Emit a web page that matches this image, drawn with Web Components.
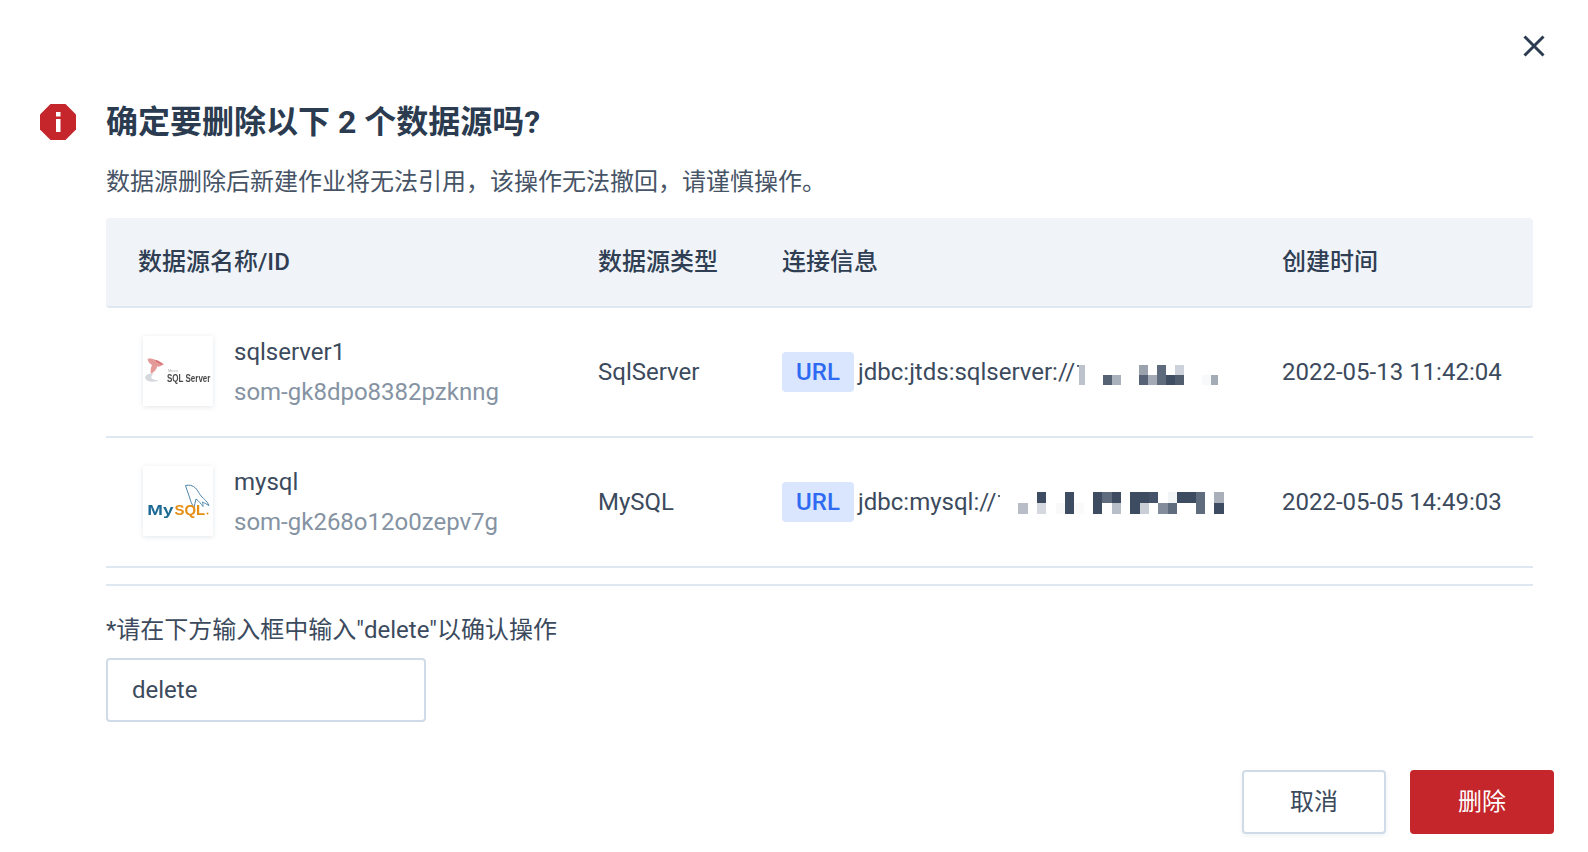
<!DOCTYPE html>
<html lang="zh"><head><meta charset="utf-8"><title>删除数据源</title>
<style>
html,body{margin:0;background:#fff}
body{font:24px/40px Roboto,"Noto Sans CJK SC",sans-serif;color:#3c4a5d}
</style></head>
<body>
<delete-dialog>
  <span slot="title">确定要删除以下 2 个数据源吗?</span>
  <span slot="desc">数据源删除后新建作业将无法引用，该操作无法撤回，请谨慎操作。</span>
  <ds-table>
    <ds-head></ds-head>
    <ds-row name="sqlserver1" rid="som-gk8dpo8382pzknng" type="SqlServer" url="jdbc:jtds:sqlserver://" clip="221" time="2022-05-13 11:42:04" shift="6"
      cells='[[6,"#bcc3cd","#bcc3cd"],[18],[9,"","#556274"],[9,"","#a9b1bc"],[18],[9,"#9aa2ae","#566376"],[9,"","#a4abb6"],[9,"#5e6b7c","#5e6b7c"],[9,"","#3f4e62"],[9,"#cdd2da","#505e70"],[18],[9,"","#f8f9fa"],[7,"","#a3abb6"]]' ch="10">
      <sql-logo></sql-logo>
    </ds-row>
    <ds-row name="mysql" rid="som-gk268o12o0zepv7g" type="MySQL" url="jdbc:mysql://" clip="142" time="2022-05-05 14:49:03" shift="2" lead="18.3"
      cells='[[9.33,"","#b8bdc8"],[9.33],[9.33,"#3d4c60","#d5d8df"],[9.33],[9.33,"","#f9f9fa"],[9.33,"#3d4c60","#3d4c60"],[9.33,"","#fafafa"],[9.33],[9.33,"#3d4c60","#3d4c60"],[9.33,"#5f6c7d",""],[9.33,"#3d4c60","#b9bfc9"],[9.33],[9.33,"#3d4c60","#3d4c60"],[9.33,"#3d4c60","#c9ced7"],[9.33,"#45536a",""],[9.33,"","#828c9a"],[9.33,"#f3f4f5","#5f6c7d"],[9.33,"#3d4c60",""],[9.33,"#3d4c60",""],[9.33,"#5f6c7d","#5f6c7d"],[9.33],[9.33,"#a9b0ba","#3d4c60"]]' ch="11">
      <my-logo></my-logo>
    </ds-row>
  </ds-table>
  <span slot="label">*请在下方输入框中输入"delete"以确认操作</span>
  <confirm-field slot="field">delete</confirm-field>
  <ui-button slot="actions">取消</ui-button>
  <ui-button slot="actions" danger>删除</ui-button>
</delete-dialog>
<script>
function def(name,css,html,init){
  customElements.define(name,class extends HTMLElement{
    connectedCallback(){
      if(this.shadowRoot)return;
      const r=this.attachShadow({mode:'open'});
      r.innerHTML='<style>'+css+'</style>'+(typeof html==='function'?html(this):html);
      if(init)init(this,r);
    }
  });
}
const COLS='grid-template-columns:492px 184px 500px 1fr;';
def('delete-dialog',`
:host{display:block;box-sizing:border-box;height:852px;width:1588px;overflow:hidden;background:#fff}
.close{display:flex;justify-content:flex-end;padding:35px 43px 0 0;height:22px}
.close svg{display:block}
.head{display:flex;align-items:center;margin:45px 55px 0 40px;height:40px;gap:30px}
.icon{flex:none;display:block}
.title{font-size:32px;font-weight:700;color:#2b3b50;line-height:40px;white-space:pre}
.body{margin:0 55px 0 106px}
.desc{margin-top:20px;line-height:40px;height:40px;color:#465466;margin-bottom:16px}
.rule{height:2px;background:#dfe7f0;margin-top:16px}
.label{margin-top:24px;height:40px;color:#3c4a5d}
.field{margin-top:8px}
.actions{display:flex;justify-content:flex-end;gap:24px;margin:48px 34px 0 0}
`,`
<div class="close"><svg width="22" height="22" viewBox="0 0 22 22"><path d="M1.5 1.5L20.5 20.5M20.5 1.5L1.5 20.5" stroke="#2a3b52" stroke-width="3" fill="none"/></svg></div>
<div class="head">
 <svg class="icon" width="36" height="36" viewBox="0 0 36 36"><path d="M10.5 0H25.5L36 10.5V25.5L25.5 36H10.5L0 25.5V10.5Z" fill="#c4262b"/><rect x="16" y="8" width="4.5" height="4.5" fill="#fff"/><rect x="16" y="15" width="4.5" height="13" fill="#fff"/></svg>
 <div class="title"><slot name="title"></slot></div>
</div>
<div class="body">
 <div class="desc"><slot name="desc"></slot></div>
 <slot></slot>
 <div class="rule"></div>
 <div class="label"><slot name="label"></slot></div>
 <div class="field"><slot name="field"></slot></div>
</div>
<div class="actions"><slot name="actions"></slot></div>`);
def('ds-table',':host{display:block}','<slot></slot>');
def('ds-head',`
:host{display:grid;${COLS}align-items:center;box-sizing:border-box;height:90px;background:#f0f4f9;border-bottom:2px solid #dfe7f0;border-radius:4px;font-weight:500;color:#2f3e52}
.first{padding-left:32px}
`,`<div class="first">数据源名称/ID</div><div>数据源类型</div><div>连接信息</div><div>创建时间</div>`);
def('ds-row',`
:host{display:grid;${COLS}align-items:center;box-sizing:border-box;height:130px;border-bottom:2px solid #dfe7f0;color:#3c4a5d}
.name{display:flex;align-items:center;padding-left:37px;gap:21px}
.id{color:#8593a3;white-space:nowrap}
.conn{display:flex;align-items:center}
.txt{display:flex;justify-content:space-between;align-items:flex-start;white-space:nowrap;margin-left:4px;flex:none}
.tick{width:2px;height:2px;margin-top:13px;background:#5a6777}
`,h=>`
<div class="name"><slot></slot><div><div>${h.getAttribute('name')}</div><div class="id">${h.getAttribute('rid')}</div></div></div>
<div>${h.getAttribute('type')}</div>
<div class="conn"><url-tag>URL</url-tag><div class="txt" style="width:${h.getAttribute('clip')}px"><span>${h.getAttribute('url')}</span><i class="tick"></i></div><pixel-mask style="margin-left:${h.getAttribute('lead')||0}px;margin-top:${h.getAttribute('shift')}px" cells='${h.getAttribute('cells')}' ch="${h.getAttribute('ch')}"></pixel-mask></div>
<div>${h.getAttribute('time')}</div>`);
def('url-tag',`:host{display:block;flex:none;box-sizing:border-box;width:72px;height:40px;line-height:40px;text-align:center;border-radius:4px;background:#d9e6fd;color:#2f6bf2;font-weight:500}`,'<slot></slot>');
def('pixel-mask',`
:host{display:flex;flex:none}
.c{display:flex;flex-direction:column}
`,h=>{
  const ch=h.getAttribute('ch');
  return JSON.parse(h.getAttribute('cells')).map(c=>`<div class="c" style="width:${c[0]}px"><div style="height:${ch}px;background:${c[1]||'transparent'}"></div><div style="height:${ch}px;background:${c[2]||'transparent'}"></div></div>`).join('');
});
const LOGO=':host{display:block;flex:none;width:70px;height:70px;margin-bottom:3px;background:#fff;box-shadow:0 1px 5px rgba(40,60,90,.13)}svg{display:block}';
def('sql-logo',LOGO+'svg{filter:blur(.55px)}',`<svg width="70" height="70" viewBox="0 0 70 70">
<path d="M4.5 23C7 22 10 23 13 24C16 25 19 26 21 28.5C18 30 16 31 14 30.5C14 33 11 36 8 38C7 35 8 31 9 29C7 28 5 26 4.5 23Z" fill="#e59a9a"/>
<path d="M13 24.5C15 26 17 27 19 28.5" stroke="#d46a6a" stroke-width="1.4" fill="none"/>
<path d="M2 41C3 38 7 37 11 37.5C9 39 8 40 8.5 42C10 44 13 44 16 44.5C10 47 3 46 2 41Z" fill="#d5d9de"/>
<text x="25" y="36" font-family="Liberation Sans" font-size="4" fill="#aaa">Micro</text>
<text transform="translate(24 46) scale(1 1.3)" font-family="Liberation Sans" font-size="8" font-weight="700" fill="#4a4a4a">SQL Server</text></svg>`);
def('my-logo',LOGO+'svg{filter:blur(.3px)}',`<svg width="70" height="70" viewBox="0 0 70 70">
<path d="M42.5 19.5C46 18.5 50 19.5 52.5 22C55 24.5 56 28 59 31C61 33 64 35 66 39.5C63 38 61 36.5 59.5 36C60 38 60 39 60 40.5C58 38 56 35 53 33C52 36 52 38.5 51 41.5C49 38.5 47.5 35.5 46.5 31C45 27 43.5 23 42.5 19.5Z" fill="none" stroke="#4e86aa" stroke-width="1"/>
<text transform="translate(4.3 48.5) scale(1.3 1)" font-family="Liberation Sans" font-size="14.5" font-weight="700" fill="#1d6a94">My</text>
<text transform="translate(31.5 48.5) scale(1.03 1)" font-family="Liberation Sans" font-size="14.5" font-weight="700" fill="#e48e12">SQL</text>
<circle cx="64.5" cy="47.5" r="1" fill="#e48e12"/></svg>`);
def('confirm-field',`:host{display:block;box-sizing:border-box;width:320px;height:64px;line-height:60px;padding:0 24px;border:2px solid #cfdbe8;border-radius:4px;color:#3c4a5d;background:#fff}`,'<slot></slot>');
def('ui-button',`
:host{display:block;box-sizing:border-box;width:144px;height:64px;line-height:60px;text-align:center;border:2px solid #cfdbe8;border-radius:4px;background:#fff;color:#3c4a5d;box-shadow:0 2px 4px rgba(60,90,120,.08)}
:host([danger]){background:#c4262b;border-color:#c4262b;color:#fff;box-shadow:none}
`,'<slot></slot>');
</script>
</body></html>
